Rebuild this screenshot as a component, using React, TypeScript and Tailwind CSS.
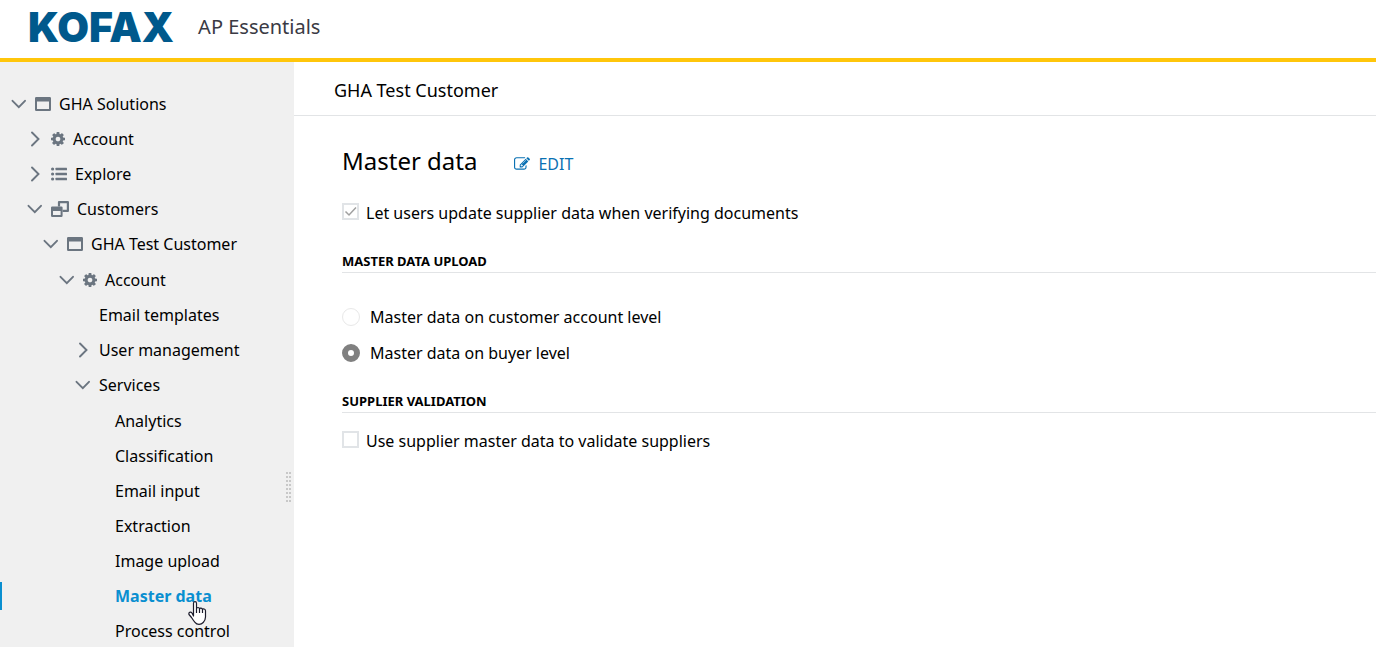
import type { ReactNode } from "react";

type IconName = "window" | "gear" | "list" | "copies";

type Node = {
  label: string;
  icon?: IconName;
  open?: boolean;
  active?: boolean;
  children?: Node[];
};

const services = [
  "Analytics",
  "Classification",
  "Email input",
  "Extraction",
  "Image upload",
  "Master data",
  "Process control",
];

const tree: Node[] = [
  {
    label: "GHA Solutions",
    icon: "window",
    open: true,
    children: [
      { label: "Account", icon: "gear", open: false },
      { label: "Explore", icon: "list", open: false },
      {
        label: "Customers",
        icon: "copies",
        open: true,
        children: [
          {
            label: "GHA Test Customer",
            icon: "window",
            open: true,
            children: [
              {
                label: "Account",
                icon: "gear",
                open: true,
                children: [
                  { label: "Email templates" },
                  { label: "User management", open: false },
                  {
                    label: "Services",
                    open: true,
                    children: services.map((label) => ({ label, active: label === "Master data" })),
                  },
                ],
              },
            ],
          },
        ],
      },
    ],
  },
];

const indent = ["pl-[11px]", "pl-[27px]", "pl-[43px]", "pl-[59px]", "pl-[75px]", "pl-[91px]"];
const listSpacing = ["", "", "", "pt-px", "", "pt-px"];

function Chevron({ open }: { open: boolean }) {
  return (
    <svg className="h-4 w-4 shrink-0 text-[#6b7580]" viewBox="0 0 16 16" fill="none" stroke="currentColor" strokeWidth="1.9" strokeLinecap="round">
      {open ? <path d="M1.500 4.800 7.800 11.200 14 4.800" /> : <path d="M5 1.500 11.500 8 5 14.500" />}
    </svg>
  );
}

function TreeIcon({ name }: { name: IconName }) {
  if (name === "window") {
    return (
      <svg className="h-[14px] w-4 shrink-0" viewBox="0 0 16 14" fill="currentColor">
        <path fillRule="evenodd" d="M1.3 0h13.4Q16 0 16 1.3v11.4Q16 14 14.7 14H1.3Q0 14 0 12.7V1.3Q0 0 1.3 0ZM2 4.500v7.500h12V4.500Z" />
      </svg>
    );
  }
  if (name === "gear") {
    return (
      <svg className="h-[14px] w-[14px] shrink-0" viewBox="0 128 1536 1536" fill="currentColor">
        <path d="M1024 896q0-106-75-181t-181-75-181 75-75 181 75 181 181 75 181-75 75-181zm512-109v222q0 12-8 23t-20 13l-185 28q-19 54-39 91 35 50 107 138 10 12 10 25t-9 23q-27 37-99 108t-94 71q-12 0-26-9l-138-108q-44 23-91 38-16 136-29 186-7 28-36 28h-222q-14 0-24.5-8.5t-11.5-21.5l-28-184q-49-16-90-37l-141 107q-10 9-25 9-14 0-25-11-126-114-165-168-7-10-7-23 0-12 8-23 15-21 51-66.5t54-70.5q-27-50-41-99l-183-27q-13-2-21-12.5t-8-23.5v-222q0-12 8-23t19-13l186-28q14-46 39-92-40-57-107-138-10-12-10-24 0-10 9-23 26-36 98.500-107.500t94.500-71.500q13 0 26 10l138 107q44-23 91-38 16-136 29-186 7-28 36-28h222q14 0 24.500 8.500t11.500 21.500l28 184q49 16 90 37l142-107q9-9 24-9 13 0 25 10 129 119 165 170 7 8 7 22 0 12-8 23-15 21-51 66.500t-54 70.500q26 50 41 98l183 28q13 2 21 12.500t8 23.500z" />
      </svg>
    );
  }
  if (name === "list") {
    return (
      <svg className="h-[14px] w-4 shrink-0" viewBox="0 0 16 14" fill="currentColor">
        {[2, 7, 12].map((y) => (
          <g key={y}>
            <circle cx="1.600" cy={y} r="1.600" />
            <rect x="4.500" y={y - 1.200} width="11.500" height="2.400" rx="0.500" />
          </g>
        ))}
      </svg>
    );
  }
  return (
    <svg className="h-4 w-[18px] shrink-0" viewBox="0 0 18 16" fill="currentColor">
      <path d="M1.200 5.400h9.200q1.200 0 1.200 1.200v8.200q0 1.200-1.200 1.200H1.200Q0 16 0 14.800V6.600Q0 5.400 1.200 5.400ZM2 10v4h7.600v-4Z" fillRule="evenodd" />
      <path d="M8 5.400V1.100h8.900v8.800h-5.300" fill="none" stroke="currentColor" strokeWidth="2.200" strokeLinejoin="round" />
    </svg>
  );
}

function TreeList({ nodes, level = 0 }: { nodes: Node[]; level?: number }) {
  return (
    <ul className={listSpacing[level]}>
      {nodes.map((node) => (
        <li key={node.label}>
          <div className={`flex h-[35px] items-center ${indent[level]} ${node.active ? "relative" : ""}`}>
            {node.active && <span className="absolute left-0 h-7 w-[2px] bg-[#0a8fd0]" />}
            <a
              href="#"
              aria-current={node.active ? "page" : undefined}
              className={`flex items-center gap-2 whitespace-nowrap ${node.active ? "font-bold text-[#0a8fd0]" : "text-black"}`}
            >
              {node.open === undefined ? <span className="w-4" /> : <Chevron open={node.open} />}
              {node.icon && (
                <span className="text-[#6b7580]">
                  <TreeIcon name={node.icon} />
                </span>
              )}
              <span>{node.label}</span>
            </a>
            {node.active && <HandPointer />}
          </div>
          {node.children && <TreeList nodes={node.children} level={level + 1} />}
        </li>
      ))}
    </ul>
  );
}

function HandPointer() {
  return (
    <svg className="absolute top-[23px] left-[188px] z-10 h-6 w-[19px]" viewBox="0 0 19 24">
      <path
        d="M5.500 15V2.200Q5.500.7 7 .7T8.500 2.200V8Q8.700 6.500 10 6.500T11.500 8Q11.800 6.900 13 7.100T14.500 8.500Q15 7.700 16.200 8T17.500 9.700V16Q17.500 19 15.200 21.500 13.500 23.300 11 23.300 8.500 23.300 7 21.300 5 19 3.500 16.500L1 13.500Q.5 12 1.700 11.300T4 12Z"
        fill="#fff"
        stroke="#1b1b2b"
        strokeWidth="1.200"
        strokeLinejoin="round"
      />
      <path d="M8.500 8v4M11.500 8v4M14.500 8.500V12" stroke="#1b1b2b" strokeWidth="1.200" />
    </svg>
  );
}

function EditIcon() {
  return (
    <svg className="h-4 w-4" viewBox="0 0 1792 1792" fill="currentColor">
      <path d="M888 1184l116-116-152-152-116 116v56h96v96h56zm440-720q-16-16-33 1l-350 350q-17 17-1 33t33-1l350-350q17-17 1-33zm80 594v190q0 119-84.500 203.500t-203.500 84.500h-832q-119 0-203.500-84.500t-84.500-203.500v-832q0-119 84.500-203.500t203.500-84.500h832q63 0 117 25 15 7 18 23 3 17-9 29l-49 49q-14 14-32 8-23-6-45-6h-832q-66 0-113 47t-47 113v832q0 66 47 113t113 47h832q66 0 113-47t47-113v-126q0-13 9-22l64-64q15-15 35-7t20 29zm-96-738l288 288-672 672h-288v-288zm444 132l-92 92-288-288 92-92q28-28 68-28t68 28l152 152q28 28 28 68t-28 68z" />
    </svg>
  );
}

function Checkbox({ children, checked = false }: { children: ReactNode; checked?: boolean }) {
  return (
    <label className="flex items-center gap-[7px]">
      <span className="grid pb-[3px]">
        <input
          type="checkbox"
          defaultChecked={checked}
          disabled
          className="peer col-start-1 row-start-1 h-[17px] w-[17px] appearance-none border-2 border-[#e1e4e7] bg-white"
        />
        <svg
          className="pointer-events-none invisible col-start-1 row-start-1 h-[17px] w-[17px] peer-checked:visible"
          viewBox="0 0 17 17"
          fill="none"
          stroke="#a0a0a0"
          strokeWidth="1.500"
        >
          <path d="M3.500 8.500 7 12 14 4.500" />
        </svg>
      </span>
      <span>{children}</span>
    </label>
  );
}

function Radio({ children, checked = false }: { children: ReactNode; checked?: boolean }) {
  return (
    <label className="flex h-9 items-center gap-[10px]">
      <input
        type="radio"
        name="level"
        defaultChecked={checked}
        disabled
        className="h-[18px] w-[18px] appearance-none rounded-full border border-[#e8e8e8] bg-white checked:border-[6px] checked:border-[#808080]"
      />
      <span>{children}</span>
    </label>
  );
}

function SectionTitle({ children }: { children: ReactNode }) {
  return <h3 className="border-b border-[#e2e4e6] pb-px text-[13px] leading-5 font-bold">{children}</h3>;
}

export default function App() {
  return (
    <div className="flex h-screen flex-col overflow-hidden bg-white font-['Noto_Sans',sans-serif] text-base text-black">
      <header className="flex h-[62px] shrink-0 items-center gap-6 border-b-4 border-[#ffc60b] pb-1 pl-7">
        <span className="font-['Inter',sans-serif] text-[41px] leading-none font-black text-[#00598c]">KOFAX</span>
        <span className="text-xl text-[#3a3a44]">AP Essentials</span>
      </header>
      <div className="flex min-h-0 flex-1">
        <aside className="relative w-[294px] shrink-0 overflow-hidden bg-[#f0f0f0] pt-6">
          <nav aria-label="Account tree">
            <TreeList nodes={tree} />
          </nav>
          <div className="absolute top-[410px] right-[3px] grid grid-cols-2 gap-x-px gap-y-[2px]">
            {Array.from({ length: 16 }, (_, i) => (
              <span key={i} className="h-[2px] w-[2px] bg-[#c8c8c8]" />
            ))}
          </div>
        </aside>
        <main className="min-w-0 flex-1">
          <div className="border-b border-[#e2e4e6] pt-[15px] pb-[11px] pl-10 text-lg leading-[27px]">GHA Test Customer</div>
          <div className="pt-[27px] pl-12">
            <div className="flex items-center gap-[37px]">
              <h2 className="text-2xl leading-9">Master data</h2>
              <button type="button" className="flex items-center gap-2 pt-[6px] text-[#0a71b3]">
                <EditIcon />
                EDIT
              </button>
            </div>
            <div className="pt-[22px]">
              <Checkbox checked>Let users update supplier data when verifying documents</Checkbox>
            </div>
            <div className="pt-[26px]">
              <SectionTitle>MASTER DATA UPLOAD</SectionTitle>
              <div className="pt-[26px]">
                <Radio>Master data on customer account level</Radio>
                <Radio checked>Master data on buyer level</Radio>
              </div>
            </div>
            <div className="pt-5">
              <SectionTitle>SUPPLIER VALIDATION</SectionTitle>
              <div className="pt-4">
                <Checkbox>Use supplier master data to validate suppliers</Checkbox>
              </div>
            </div>
          </div>
        </main>
      </div>
    </div>
  );
}
